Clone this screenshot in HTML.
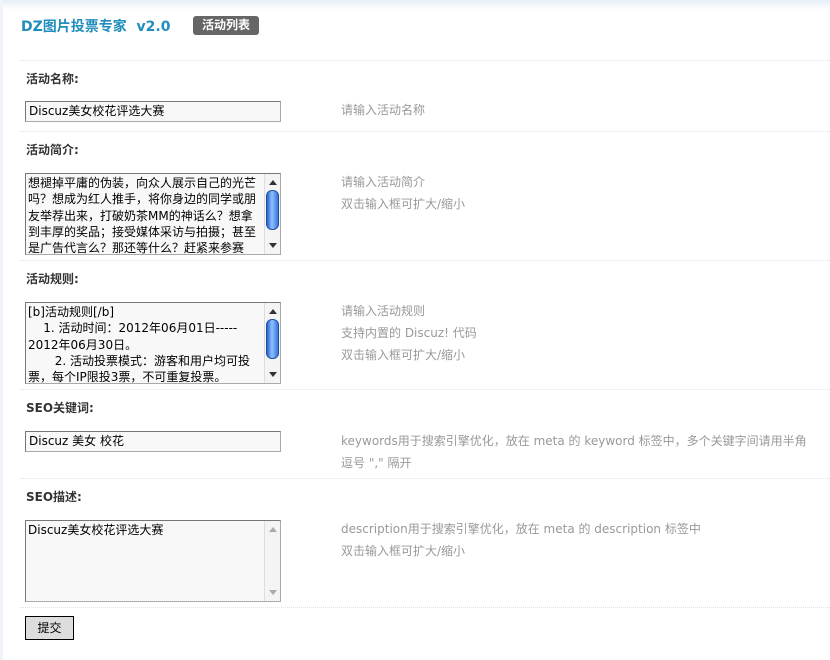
<!DOCTYPE html>
<html><head><meta charset="utf-8">
<style>
*{margin:0;padding:0;box-sizing:border-box}
body{width:830px;height:660px;background:#fff;position:relative;overflow:hidden;font-family:"DejaVu Sans","Noto Sans CJK SC",sans-serif;font-size:12px;color:#333}
.topbar{position:absolute;left:0;top:0;width:830px;height:10px;background:linear-gradient(#e6eef5,#fff)}
.leftbar{position:absolute;left:0;top:0;width:3px;height:660px;background:#eef4f9}
.title{position:absolute;left:21px;top:16px;font-size:14px;font-weight:bold;color:#1f8dbd}
.badge{position:absolute;left:193px;top:16px;width:66px;height:19px;background:#666;color:#fff;border-radius:3px;font-weight:bold;font-size:12px;line-height:19px;text-align:center}
.sep{position:absolute;left:20px;width:810px;border-top:1px dotted #dde3ea}
.lbl{position:absolute;left:26px;font-weight:bold;font-size:12px;color:#333}
.inp{position:absolute;left:25px;width:256px;height:21px;border:1px solid #aaa;border-top-color:#777;border-left-color:#777;background:#f8f8f8;font-size:12px;line-height:18px;padding-left:3px;color:#000}
.ta{position:absolute;left:25px;width:256px;height:82px;border:1px solid #aaa;border-top-color:#777;border-left-color:#777;background:#f8f8f8;overflow:hidden;color:#000}
.ta .txt{position:absolute;left:2px;top:1px;width:234px;font-size:12px;line-height:16.3px;word-break:break-all}
.sb{position:absolute;right:0;top:0;width:16px;height:80px;background:#f4f4f4;border-left:1px solid #ddd}
.sb .up,.sb .dn{position:absolute;left:4px;width:0;height:0;border-left:4px solid transparent;border-right:4px solid transparent}
.sb .up{top:6px;border-bottom:5px solid #333}
.sb .dn{bottom:6px;border-top:5px solid #333}
.sb .th{position:absolute;left:1px;top:16px;width:13px;height:40px;border-radius:6px;background:linear-gradient(90deg,#2a63c9,#8fc0ff 45%,#3a76d8);border:1px solid #1d4fa8}
.sb.dis .up{border-bottom-color:#aaa}.sb.dis .dn{border-top-color:#aaa}
.sb.dis .th{display:none}
.hint{position:absolute;left:341px;color:#999;font-size:12px;line-height:22px}
.btn{position:absolute;left:25px;top:616px;width:49px;height:24px;background:#ddd;border:1px solid #000;font-size:12px;line-height:22px;text-align:center;color:#000}
</style></head><body>
<div class="topbar"></div><div class="leftbar"></div>
<div class="title">DZ图片投票专家&nbsp; v2.0</div>
<div class="badge">活动列表</div>

<div class="sep" style="top:60px"></div>
<div class="lbl" style="top:70px">活动名称:</div>
<div class="inp" style="top:101px">Discuz美女校花评选大赛</div>
<div class="hint" style="top:99px">请输入活动名称</div>

<div class="sep" style="top:131px"></div>
<div class="lbl" style="top:141px">活动简介:</div>
<div class="ta" style="top:173px"><div class="txt">想褪掉平庸的伪装，向众人展示自己的光芒<br>吗？想成为红人推手，将你身边的同学或朋<br>友举荐出来，打破奶茶MM的神话么？想拿<br>到丰厚的奖品；接受媒体采访与拍摄；甚至<br>是广告代言么？那还等什么？赶紧来参赛<br>吧。</div><div class="sb"><div class="up"></div><div class="th"></div><div class="dn"></div></div></div>
<div class="hint" style="top:171px">请输入活动简介<br>双击输入框可扩大/缩小</div>

<div class="sep" style="top:260px"></div>
<div class="lbl" style="top:270px">活动规则:</div>
<div class="ta" style="top:302px"><div class="txt">[b]活动规则[/b]<br>&nbsp;&nbsp;&nbsp; 1. 活动时间：2012年06月01日-----<br>2012年06月30日。<br>&nbsp;&nbsp;&nbsp;&nbsp;&nbsp;&nbsp; 2. 活动投票模式：游客和用户均可投<br>票，每个IP限投3票，不可重复投票。</div><div class="sb"><div class="up"></div><div class="th"></div><div class="dn"></div></div></div>
<div class="hint" style="top:300px">请输入活动规则<br>支持内置的 Discuz! 代码<br>双击输入框可扩大/缩小</div>

<div class="sep" style="top:389px"></div>
<div class="lbl" style="top:399px">SEO关键词:</div>
<div class="inp" style="top:431px">Discuz 美女 校花</div>
<div class="hint" style="top:430px">keywords用于搜索引擎优化，放在 meta 的 keyword 标签中，多个关键字间请用半角<br>逗号 "," 隔开</div>

<div class="sep" style="top:478px"></div>
<div class="lbl" style="top:488px">SEO描述:</div>
<div class="ta" style="top:520px"><div class="txt">Discuz美女校花评选大赛</div><div class="sb dis"><div class="up"></div><div class="dn"></div></div></div>
<div class="hint" style="top:518px">description用于搜索引擎优化，放在 meta 的 description 标签中<br>双击输入框可扩大/缩小</div>

<div class="sep" style="top:607px"></div>
<div class="btn">提交</div>
</body></html>
